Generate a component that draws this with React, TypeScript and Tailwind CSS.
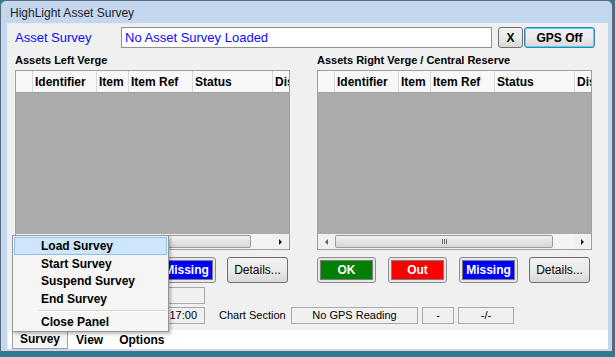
import React from 'react';

const font = "font-['Liberation_Sans',Arial,sans-serif]";

const columns = [
    { label: '', width: 'w-[17px]' },
    { label: 'Identifier', width: 'w-[64px]' },
    { label: 'Item', width: 'w-[32px]' },
    { label: 'Item Ref', width: 'w-[64px]' },
    { label: 'Status', width: 'w-[80px]' },
    { label: 'Dis', width: 'w-[40px]' },
];

function Grid() {
    return (
        <div className="w-[275px] h-[180px] border border-[#a0a0a0] flex flex-col overflow-hidden">
            {/* Cabeçalho */}
            <div className="h-[22px] flex bg-[#f8f8f8] border-b border-[#a0a0a0] shrink-0">
                {columns.map((c, i) => (
                    <div
                        key={i}
                        className={`${c.width} shrink-0 h-full border-r border-[#d8d8d8] pl-[2px] flex items-center text-[12px] font-bold text-black overflow-hidden whitespace-nowrap`}
                    >
                        {c.label}
                    </div>
                ))}
            </div>
            {/* Corpo */}
            <div className="flex-1 bg-[#ababab]" />
            {/* Barra de rolagem */}
            <div className="h-[15px] bg-[#f0f0f0] flex items-center shrink-0">
                <div className="w-[17px] h-full flex items-center justify-center">
                    <div className="w-0 h-0 border-y-[3px] border-y-transparent border-r-[3px] border-r-[#606060]" />
                </div>
                <div className="w-[218px] h-[13px] rounded-[2px] border border-[#9c9c9c] bg-gradient-to-b from-[#f4f4f4] to-[#d6d6d6] flex items-center justify-center gap-[1px]">
                    <div className="w-[1px] h-[5px] bg-[#6a6a6a]" />
                    <div className="w-[1px] h-[5px] bg-[#6a6a6a]" />
                    <div className="w-[1px] h-[5px] bg-[#6a6a6a]" />
                </div>
                <div className="flex-1 h-full bg-[#f4f4f4]" />
                <div className="w-[17px] h-full flex items-center justify-center">
                    <div className="w-0 h-0 border-y-[3px] border-y-transparent border-l-[3px] border-l-[#202020]" />
                </div>
            </div>
        </div>
    );
}

function ColorButton({ label, color }: { label: string; color: string }) {
    return (
        <div className="w-[59px] h-[26px] rounded-[3px] border border-[#8e8e8e] bg-[#e6e6e6] p-[2px]">
            <div className={`w-full h-full ${color} border border-[#7d7d7d] flex items-center justify-center text-white font-bold text-[12px]`}>
                {label}
            </div>
        </div>
    );
}

function WinButton({ label, className = '' }: { label: string; className?: string }) {
    return (
        <div className={`h-full rounded-[3px] border border-[#707070] bg-gradient-to-b from-[#f2f2f2] via-[#ebebeb] to-[#d8d8d8] flex items-center justify-center text-[12px] text-black ${className}`}>
            {label}
        </div>
    );
}

function Panel({ title }: { title: string }) {
    return (
        <div className="w-[275px] flex flex-col">
            <div className="h-[18px] flex items-center text-[11px] font-bold text-black whitespace-nowrap -mt-[1px]">{title}</div>
            <div className="mt-[1px]">
                <Grid />
            </div>
            <div className="mt-[7px] h-[26px] flex items-center gap-[12px]">
                <ColorButton label="OK" color="bg-[#008000]" />
                <ColorButton label="Out" color="bg-[#ff0000]" />
                <ColorButton label="Missing" color="bg-[#0000ff]" />
                <WinButton label="Details..." className="w-[61px] h-[26px] -ml-[1px]" />
            </div>
        </div>
    );
}

export default function App() {
    return (
        <div className={`w-[615px] h-[357px] bg-[#2a7d8c] overflow-hidden ${font}`}>
            {/* Janela */}
            <div className="w-[613px] h-[352px] rounded-t-[6px] border border-[#5a6a7c] bg-[#c3d7ee] flex flex-col pl-[6px] pr-[4px] pb-[2px]">
                {/* Barra de título */}
                <div className="h-[22px] flex items-center pl-[3px] pt-[2px] text-[12px] text-[#1e1e1e] shrink-0">
                    HighLight Asset Survey
                </div>

                {/* Área cliente */}
                <div className="flex-1 bg-[#f0f0f0] flex flex-col relative border-l border-t border-[#e8eef6]">
                    <div className="flex-1 px-[7px]">
                        {/* Linha superior */}
                        <div className="mt-[3px] h-[21px] flex items-center">
                            <span className="w-[106px] text-[13px] text-[#0a0aff] leading-none">Asset Survey</span>
                            <div className="w-[371px] h-[21px] bg-white border border-[#8f8f8f] flex items-center pl-[3px] text-[13px] text-[#0a0aff]">
                                No Asset Survey Loaded
                            </div>
                            <WinButton label="X" className="ml-[6px] w-[25px] font-bold text-[11px]" />
                            <div className="ml-[1px] w-[71px] h-full rounded-[3px] border border-[#3c7fb1] shadow-[inset_0_0_0_1px_#48d8fb] bg-gradient-to-b from-[#f2f2f2] via-[#ebebeb] to-[#d8d8d8] flex items-center justify-center text-[12px] font-bold text-black">
                                GPS Off
                            </div>
                        </div>

                        {/* Painéis */}
                        <div className="mt-[4px] flex gap-[27px]">
                            <Panel title="Assets Left Verge" />
                            <Panel title="Assets Right Verge / Central Reserve" />
                        </div>

                        {/* Caixas inferiores */}
                        <div className="mt-[4px] h-[17px] flex">
                            <div className="ml-[106px] w-[84px] h-full border border-[#a8a8a8]" />
                        </div>
                        <div className="mt-[3px] h-[17px] flex items-center text-[11px] text-black">
                            <div className="ml-[106px] w-[84px] h-full border border-[#a8a8a8] flex items-center justify-end pr-[7px]">17:00</div>
                            <span className="ml-[14px] w-[72px]">Chart Section</span>
                            <div className="w-[127px] h-full border border-[#a8a8a8] flex items-center justify-center">No GPS Reading</div>
                            <div className="ml-[4px] w-[32px] h-full border border-[#a8a8a8] flex items-center justify-center">-</div>
                            <div className="ml-[4px] w-[56px] h-full border border-[#a8a8a8] flex items-center justify-center">-/-</div>
                        </div>
                    </div>

                    {/* Barra de menu */}
                    <div className="h-[19px] bg-white flex items-stretch text-[12px] font-bold text-black shrink-0 pl-[4px]">
                        <div className="px-[7px] flex items-center border border-[#a0a0a0] border-t-0 bg-[#f5f5f5]">Survey</div>
                        <div className="px-[8px] flex items-center">View</div>
                        <div className="px-[8px] flex items-center">Options</div>
                    </div>

                    {/* Menu suspenso */}
                    <div className="absolute left-[4px] bottom-[17px] w-[157px] border border-[#979797] bg-[#f5f5f5] pt-[1px] px-[1px] text-[12px] font-bold text-black shadow-[2px_2px_3px_rgba(0,0,0,0.25)]">
                        <div className="h-[18px] flex items-center pl-[26px] bg-[#cde6fb] border border-[#8fc0ec]">Load Survey</div>
                        <div className="h-[17.5px] flex items-center pl-[27px]">Start Survey</div>
                        <div className="h-[17.5px] flex items-center pl-[27px]">Suspend Survey</div>
                        <div className="h-[17.5px] flex items-center pl-[27px]">End Survey</div>
                        <div className="h-[6px] flex items-center pl-[25px] pr-[1px]">
                            <div className="w-full h-[2px] border-t border-[#d6d6d6] border-b border-b-white" />
                        </div>
                        <div className="h-[17.5px] flex items-center pl-[27px]">Close Panel</div>
                    </div>
                </div>
            </div>
        </div>
    );
}
